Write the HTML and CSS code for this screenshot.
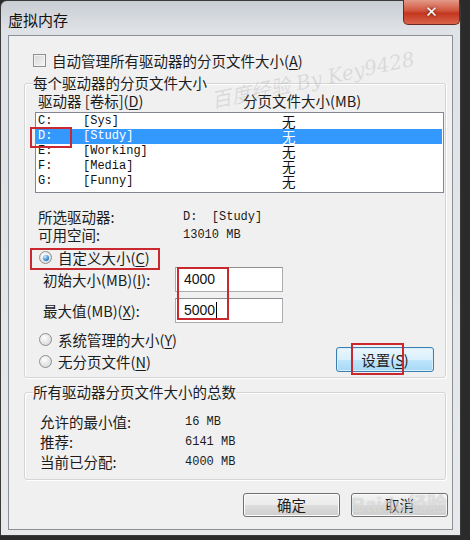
FILE: index.html
```html
<!DOCTYPE html>
<html lang="zh-CN">
<head>
    <meta charset="UTF-8">
    <title>虚拟内存</title>
    <link rel="stylesheet" href="styles.css">
</head>
<body>
    <div class="window">
        <div class="titlebar">
            <span class="title">虚拟内存</span>
            <button class="close">&#x2715;</button>
        </div>
        <div class="client">
            <label class="check-row">
                <span class="checkbox"></span>
                <span>自动管理所有驱动器的分页文件大小(<u>A</u>)</span>
            </label>

            <fieldset class="group">
                <legend>每个驱动器的分页文件大小</legend>
                <div class="list-head">
                    <span>驱动器 [卷标](<u>D</u>)</span>
                    <span>分页文件大小(MB)</span>
                </div>
                <div class="list">
                    <div class="row"><span class="mono">C:</span><span class="mono">[Sys]</span><span class="size">无</span></div>
                    <div class="row selected"><span class="mono">D:</span><span class="mono">[Study]</span><span class="size">无</span></div>
                    <div class="row"><span class="mono">E:</span><span class="mono">[Working]</span><span class="size">无</span></div>
                    <div class="row"><span class="mono">F:</span><span class="mono">[Media]</span><span class="size">无</span></div>
                    <div class="row"><span class="mono">G:</span><span class="mono">[Funny]</span><span class="size">无</span></div>
                </div>

                <div class="info">
                    <div class="info-row"><span>所选驱动器:</span><span class="mono">D:  [Study]</span></div>
                    <div class="info-row"><span>可用空间:</span><span class="mono">13010 MB</span></div>
                </div>

                <div class="radio-row custom">
                    <span class="radio on"></span>
                    <span>自定义大小(<u>C</u>)</span>
                </div>
                <div class="field-row">
                    <span class="field-label">初始大小(MB)(<u>I</u>):</span>
                    <div class="input">4000</div>
                </div>
                <div class="field-row second">
                    <span class="field-label">最大值(MB)(<u>X</u>):</span>
                    <div class="input">5000<span class="caret"></span></div>
                </div>

                <div class="bottom-row">
                    <div class="radios">
                        <div class="radio-row">
                            <span class="radio"></span>
                            <span>系统管理的大小(<u>Y</u>)</span>
                        </div>
                        <div class="radio-row">
                            <span class="radio"></span>
                            <span>无分页文件(<u>N</u>)</span>
                        </div>
                    </div>
                    <button class="btn focus">设置(<u>S</u>)</button>
                </div>
            </fieldset>

            <fieldset class="group totals">
                <legend>所有驱动器分页文件大小的总数</legend>
                <div class="total-row"><span>允许的最小值:</span><span class="mono">16 MB</span></div>
                <div class="total-row"><span>推荐:</span><span class="mono">6141 MB</span></div>
                <div class="total-row"><span>当前已分配:</span><span class="mono">4000 MB</span></div>
            </fieldset>

            <div class="actions">
                <button class="btn">确定</button>
                <button class="btn">取消</button>
            </div>

            <!-- annotation boxes drawn over the dialog -->
            <div class="mark mark-drive"></div>
            <div class="mark mark-radio"></div>
            <div class="mark mark-inputs"></div>
            <div class="mark mark-button"></div>
            <div class="watermark">百度经验 By Key9428</div>
            <div class="watermark-baidu">Baidu经验</div>
        </div>
    </div>
</body>
</html>
```

FILE: styles.css
```css
body {
    margin: 0;
    background: #2b2b2b;
    font-family: "Noto Sans CJK SC", sans-serif;
    font-size: 14.5px;
    color: #1c1c1c;
    width: 470px;
    height: 540px;
    overflow: hidden;
}
u {
    text-decoration-thickness: 1px;
    text-underline-offset: 2px;
}
.mono {
    font-family: "Liberation Mono", "Noto Sans CJK SC", monospace;
    font-size: 12px;
    white-space: pre;
}
.window {
    width: 461px;
    height: 536px;
    box-sizing: border-box;
    border: 1px solid #3a3a3a;
    border-radius: 7px 7px 0 0;
    background: linear-gradient(#c9ced4, #dfe2e6 30px, #e7e9eb);
    display: flex;
    flex-direction: column;
}
.titlebar {
    height: 34px;
    display: flex;
    justify-content: space-between;
    align-items: flex-start;
    padding-left: 7px;
}
.title {
    font-size: 15px;
    line-height: 20px;
    margin-top: 9px;
    color: #111;
}
.close {
    width: 57px;
    height: 25px;
    margin-top: -1px;
    border: 1px solid #6b2a20;
    border-top: none;
    border-radius: 0 0 5px 5px;
    background: linear-gradient(#e39a88, #d0553e 45%, #c4361f 55%, #d9644a);
    color: #fff;
    font-size: 15px;
    font-weight: bold;
    line-height: 22px;
    padding: 0;
    text-shadow: 0 0 3px #5a1408;
    font-family: "DejaVu Sans", sans-serif;
}
.client {
    position: relative;
    margin: 0 7px 5px 7px;
    flex: 1;
    border: 1px solid #8b9096;
    background: #f0f0f0;
    padding: 0 4px 0 15px;
    display: flex;
    flex-direction: column;
    overflow: hidden;
}
.check-row {
    display: flex;
    align-items: center;
    gap: 6px;
    height: 20px;
    margin: 14px 0 0 9px;
}
.checkbox {
    width: 11px;
    height: 11px;
    border: 1px solid #8e8f8f;
    background: linear-gradient(135deg, #d6d6d6, #f6f6f6);
    box-shadow: inset 0 0 0 1px #f4f4f4;
}
.group {
    margin: 3px 2px 0 0;
    padding: 0 1px 6px 10px;
    border: 1px solid #d5d5d5;
    border-radius: 3px;
    box-shadow: inset 1px 1px 0 #fff, 1px 1px 0 #fff;
}
.group legend {
    padding: 0;
    margin-left: -2px;
    line-height: 20px;
}
.list-head {
    display: flex;
    height: 16px;
    line-height: 16px;
    padding-left: 3px;
}
.list-head span:first-child {
    width: 205px;
}
.list {
    margin-top: 3px;
    height: 78px;
    border: 1px solid #828790;
    background: #fff;
    padding-top: 1px;
}
.row {
    display: grid;
    grid-template-columns: 45px 199px 1fr;
    align-items: center;
    height: 15px;
    line-height: 15px;
    padding-left: 2px;
    margin-right: 1px;
    color: #111;
}
.row .size {
    font-size: 13.5px;
    line-height: 15px;
}
.row.selected {
    background: #3399ff;
    color: #fff;
}
.info {
    margin-top: 13px;
}
.info-row,
.total-row {
    display: grid;
    grid-template-columns: 145px 1fr;
    align-items: center;
    height: 18px;
    padding-left: 3px;
}
.radio-row {
    display: flex;
    align-items: center;
    gap: 6px;
    height: 20px;
    padding-left: 4px;
}
.radio-row.custom {
    margin-top: 6px;
    height: 19px;
}
.radio {
    width: 11px;
    height: 11px;
    border-radius: 50%;
    border: 1px solid #8e8f8f;
    background: radial-gradient(circle at 40% 35%, #fdfdfd, #dedede 70%, #c8c8c8);
    display: flex;
    align-items: center;
    justify-content: center;
}
.radio.on::after {
    content: "";
    width: 6px;
    height: 6px;
    border-radius: 50%;
    background: radial-gradient(circle at 35% 30%, #cdeeff, #3c93d8 55%, #1a4f8f);
}
.field-row {
    display: flex;
    align-items: center;
    height: 25px;
    padding-left: 8px;
}
.field-row.second {
    margin-top: 6px;
}
.field-label {
    width: 132px;
}
.input {
    width: 98px;
    height: 23px;
    border: 1px solid #abadb3;
    border-top-color: #8e9094;
    background: #fff;
    font-family: "Liberation Sans", sans-serif;
    font-size: 14px;
    line-height: 22px;
    padding-left: 8px;
    color: #111;
}
.caret {
    display: inline-block;
    width: 1px;
    height: 16px;
    background: #000;
    vertical-align: -3px;
    margin-left: 1px;
}
.bottom-row {
    display: flex;
    justify-content: space-between;
    align-items: flex-end;
    margin-top: 6px;
    padding-right: 10px;
}
.radios {
    display: flex;
    flex-direction: column;
    gap: 2px;
}
.btn {
    width: 98px;
    height: 25px;
    border: 1px solid #707070;
    border-radius: 3px;
    background: linear-gradient(#f2f2f2, #ebebeb 50%, #dddddd 51%, #cfcfcf);
    box-shadow: inset 0 0 0 1px #fcfcfc;
    font-family: "Noto Sans CJK SC", sans-serif;
    font-size: 14.5px;
    color: #1c1c1c;
    padding: 0;
    line-height: 22px;
}
.btn.focus {
    margin-bottom: -1px;
    border-color: #3c7fb1;
    background: linear-gradient(#eaf6fd, #d9f0fc 50%, #bee6fd 51%, #a7d9f5);
    box-shadow: inset 0 0 0 1px #d6eefb;
}
.totals {
    margin-top: 4px;
    padding-bottom: 8px;
}
.totals legend {
    margin-bottom: 9px;
}
.total-row {
    height: 20px;
    padding-left: 5px;
}
.actions {
    display: flex;
    justify-content: flex-end;
    gap: 11px;
    margin-top: 13px;
}
.actions .btn {
    width: 97px;
    height: 24px;
}
.mark {
    position: absolute;
    border: 2px solid #c9282e;
    box-sizing: border-box;
}
.mark-drive {
    left: 21px;
    top: 91px;
    width: 42px;
    height: 21px;
}
.mark-radio {
    left: 21px;
    top: 212px;
    width: 130px;
    height: 22px;
}
.mark-inputs {
    left: 168px;
    top: 231px;
    width: 52px;
    height: 53px;
}
.mark-button {
    left: 342px;
    top: 307px;
    width: 53px;
    height: 32px;
}
.watermark {
    position: absolute;
    left: 200px;
    top: 28px;
    transform: rotate(-12deg);
    font-family: "DejaVu Serif", serif;
    font-style: italic;
    font-size: 20px;
    color: rgba(150, 150, 150, 0.25);
    white-space: nowrap;
    pointer-events: none;
}
.watermark-baidu {
    position: absolute;
    left: 342px;
    top: 453px;
    font-family: "Liberation Sans", sans-serif;
    font-size: 20px;
    font-weight: bold;
    color: rgba(255, 255, 255, 0.5);
    text-shadow: 0 0 1px rgba(120, 120, 120, 0.45);
    pointer-events: none;
}
```
